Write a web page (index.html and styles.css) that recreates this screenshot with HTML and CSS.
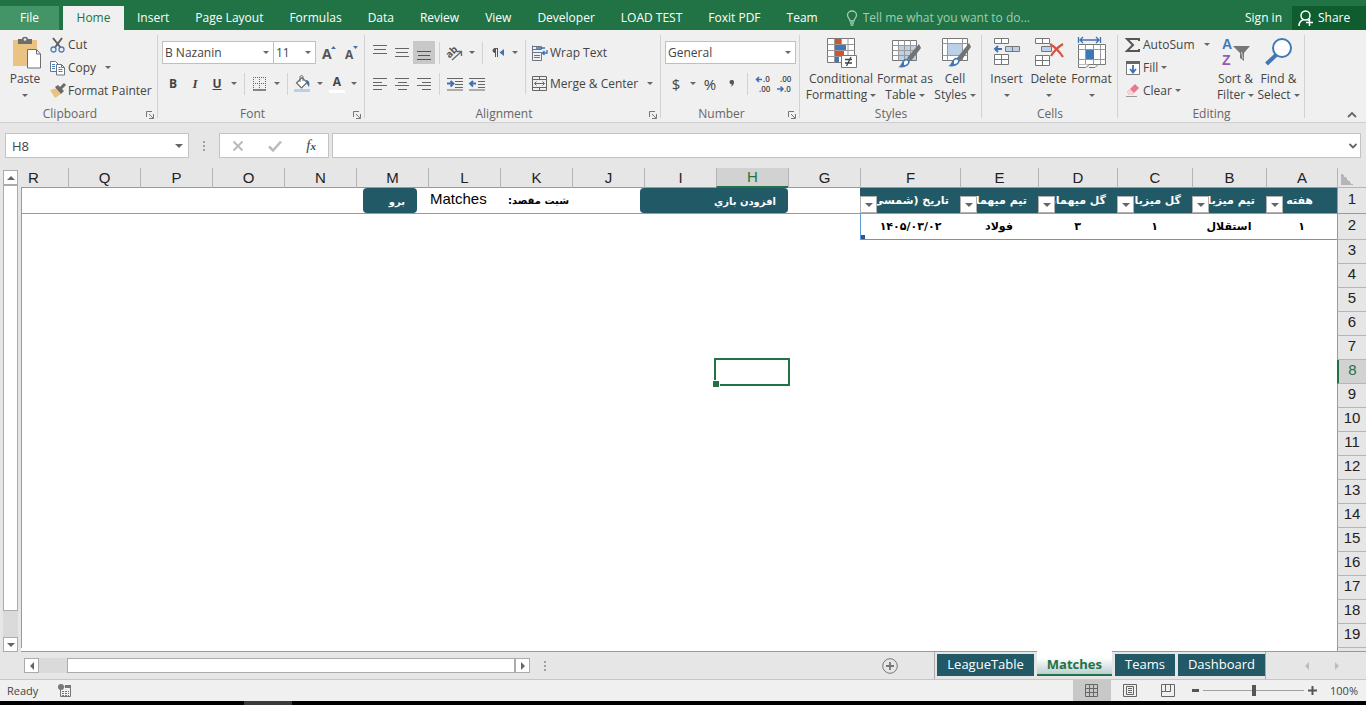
FILE: index.html
```html
<!DOCTYPE html>
<html lang="en">
<head>
<meta charset="utf-8">
<title>Matches</title>
<link rel="stylesheet" href="styles.css">
</head>
<body>
<div class="app">
  <nav class="tabs">
    <button class="tab tab-file">File</button>
    <button class="tab tab-active">Home</button>
    <button class="tab">Insert</button>
    <button class="tab">Page Layout</button>
    <button class="tab">Formulas</button>
    <button class="tab">Data</button>
    <button class="tab">Review</button>
    <button class="tab">View</button>
    <button class="tab">Developer</button>
    <button class="tab">LOAD TEST</button>
    <button class="tab">Foxit PDF</button>
    <button class="tab">Team</button>
    <label class="tell">
      <svg width="12" height="16" viewBox="0 0 12 16" fill="none" stroke="#9fcdb2" stroke-width="1.3"><path d="M4 11C4 8.500 1.500 8 1.500 5a4.500 4 0 0 1 9 0C10.500 8 8 8.500 8 11zM4 13h4M4.500 15h3"/></svg>
      <input type="text" placeholder="Tell me what you want to do..." aria-label="Tell me what you want to do">
    </label>
    <button class="tab sign">Sign in</button>
    <button class="share">
      <svg width="16" height="17" viewBox="0 0 16 17" fill="none" stroke="#fff" stroke-width="1.500"><circle cx="7.500" cy="5.500" r="4.500"/><path d="M1 16c0-4 2-5.500 4.500-6.500M9.500 9.500l1.500 1M11.500 9v7M8 12.500h7"/></svg>
      Share
    </button>
  </nav>

  <section class="ribbon">
    <div class="group g-clip">
      <div class="body">
        <button class="big paste">
          <svg width="30" height="32" viewBox="0 0 30 32"><rect x="1" y="3" width="24" height="26" fill="#eac282"/><path d="M6 2h4c0-3 6-3 6 0h4v5H6z" fill="#6d6d6d"/><circle cx="13" cy="2.500" r="1.300" fill="#f0f0f0"/><path d="M15.500 12.500h9l4 4.500v14h-13z" fill="#fff" stroke="#6d6d6d"/><path d="M24.500 12.500V17h4" fill="none" stroke="#6d6d6d"/></svg>
          <span>Paste</span><i class="caret"></i>
        </button>
        <div class="stack">
          <button class="line"><svg width="16" height="16" viewBox="0 0 16 16" fill="none"><path d="M3 1l7.500 9.500M12 1L5 10.500" stroke="#5e5e5e" stroke-width="2"/><circle cx="3.500" cy="12.500" r="2.500" stroke="#4a7ebb" stroke-width="1.300"/><circle cx="11.500" cy="12.500" r="2.500" stroke="#4a7ebb" stroke-width="1.300"/></svg>Cut</button>
          <button class="line"><svg width="16" height="16" viewBox="0 0 16 16" fill="#fff" stroke="#6a7585"><path d="M.5 1.500h5l2.500 2.500v7.500H.5z"/><path d="M6.500 4.500h5l3 3v7.500h-8zM11.500 4.500v3h3"/><path d="M2 4.500h3M2 6.500h3M2 8.500h3M8.500 9.500h4M8.500 11.500h4M8.500 7.500h2" stroke="#4a7ebb"/></svg>Copy<i class="caret gap"></i></button>
          <button class="line"><svg width="16" height="16" viewBox="0 0 16 16"><path d="M0 7l7-2 4 6-6 4z" fill="#eac282"/><path d="M5 4l3-2 6 6-3 3z" fill="#6a6a6a"/><path d="M10.500 5.500L15 1" stroke="#6a6a6a" stroke-width="3"/></svg>Format Painter</button>
        </div>
      </div>
      <footer>Clipboard<button class="launch" aria-label="Clipboard settings"><svg width="8" height="8" viewBox="0 0 8 8" fill="none" stroke="#777"><path d="M.5 6V.5H6M3 3l4 4M7.500 3v4.500H3"/></svg></button></footer>
    </div>

    <div class="group g-font">
      <div class="body rows">
        <div class="row">
          <label class="combo w-font"><input type="text" value="B Nazanin" aria-label="Font"><i class="caret"></i></label>
          <label class="combo w-size"><input type="text" value="11" aria-label="Font size"><i class="caret"></i></label>
          <button class="ic grow"><svg width="16" height="18" viewBox="0 0 16 18"><text x="0" y="15" class="g-a1">A</text><path d="M9 5l2.500-3L14 5z" fill="#4472b0"/></svg></button>
          <button class="ic"><svg width="16" height="18" viewBox="0 0 16 18"><text x="1" y="15" class="g-a2">A</text><path d="M9 2h5l-2.500 3z" fill="#4472b0"/></svg></button>
        </div>
        <div class="row">
          <button class="ic bold">B</button>
          <button class="ic ital">I</button>
          <button class="ic under">U</button>
          <button class="dd" aria-label="Underline options"><i class="caret"></i></button>
          <i class="sep"></i>
          <button class="ic"><svg width="14" height="14" viewBox="0 0 14 14" stroke="#666" fill="none"><path d="M.5 0v13M6.500 0v13M12.500 0v13M0 .5h13M0 6.500h13" stroke-dasharray="1 1"/><path d="M0 13h13" stroke-width="1.500"/></svg></button>
          <button class="dd" aria-label="Border options"><i class="caret"></i></button>
          <i class="sep"></i>
          <button class="ic"><svg width="18" height="18" viewBox="0 0 18 18"><path d="M0 14h16v3H0z" fill="#b7cfe8"/><path d="M2.500 8L8 2.500l5 5L7.500 13z" fill="#fff" stroke="#6a6a6a" stroke-width="1.200"/><path d="M6 7V2c0-2 3-2 3 0v4" fill="none" stroke="#6a6a6a"/><path d="M12 5c3 0 4 3 3 7l-2-3z" fill="#3f6fa8"/></svg></button>
          <button class="dd" aria-label="Fill options"><i class="caret"></i></button>
          <button class="ic fcol">A</button>
          <button class="dd" aria-label="Font colour options"><i class="caret"></i></button>
        </div>
      </div>
      <footer>Font<button class="launch" aria-label="Font settings"><svg width="8" height="8" viewBox="0 0 8 8" fill="none" stroke="#777"><path d="M.5 6V.5H6M3 3l4 4M7.500 3v4.500H3"/></svg></button></footer>
    </div>

    <div class="group g-align">
      <div class="body">
        <div class="cols-left">
          <div class="row">
            <button class="ic"><svg class="up" width="14" height="14" viewBox="0 0 14 14" stroke="#666"><path d="M0 .5h14M1 4.500h12M0 8.500h14"/></svg></button>
            <button class="ic"><svg width="14" height="14" viewBox="0 0 14 14" stroke="#666"><path d="M0 2.500h14M1 6.500h12M0 10.500h14"/></svg></button>
            <button class="ic on"><svg width="14" height="14" viewBox="0 0 14 14" stroke="#555"><path d="M0 5.500h14M1 9.500h12M0 13.500h14"/></svg></button>
            <i class="sep"></i>
            <button class="ic"><svg width="20" height="18" viewBox="0 0 20 18"><text x="1" y="12" transform="rotate(-45 6 9)" class="g-ab">ab</text><path d="M7 16l9-8M12 7.500h4.500V12" fill="none" stroke="#666" stroke-width="1.300"/></svg></button>
            <button class="dd" aria-label="Orientation options"><i class="caret"></i></button>
            <i class="sep"></i>
            <button class="ic"><svg width="14" height="12" viewBox="0 0 14 12"><path d="M7 1.500H4a2 2 0 0 0 0 4V2M4.500 1v9M6.500 1v9" stroke="#555" fill="#555"/><path d="M13 2v7L8.500 5.500z" fill="#4472b0"/></svg></button>
            <button class="dd" aria-label="Text direction options"><i class="caret"></i></button>
          </div>
          <div class="row">
            <button class="ic"><svg width="14" height="12" viewBox="0 0 14 12" stroke="#666"><path d="M0 .5h14M0 4.500h9M0 7.500h14M0 11.500h9"/></svg></button>
            <button class="ic"><svg width="14" height="12" viewBox="0 0 14 12" stroke="#666"><path d="M0 .5h14M3 4.500h9M0 7.500h14M3 11.500h9"/></svg></button>
            <button class="ic"><svg width="14" height="12" viewBox="0 0 14 12" stroke="#666"><path d="M0 .5h14M5 4.500h9M0 7.500h14M5 11.500h9"/></svg></button>
            <i class="sep"></i>
            <button class="ic"><svg width="16" height="14" viewBox="0 0 16 14" stroke="#666"><path d="M0 1.500h16M8 4.500h8M8 7.500h8M8 10.500h8M0 13h16"/><path d="M0 6.500h6M3.500 4l3 2.500-3 3" stroke="#3f6fb0" fill="none" stroke-width="1.800"/></svg></button>
            <button class="ic"><svg width="16" height="14" viewBox="0 0 16 14" stroke="#666"><path d="M0 1.500h16M9 4.500h7M9 7.500h7M9 10.500h7M0 13h16"/><path d="M1 6.500h6M4 4L1 6.500l3 3" stroke="#3f6fb0" fill="none" stroke-width="1.800"/></svg></button>
          </div>
        </div>
        <div class="cols-right">
          <button class="line tall"><svg width="16" height="16" viewBox="0 0 16 16" fill="none" stroke="#6a7585"><path d="M.5.500v15M.5 1.500h9v3h-9M.5 7.500h9v8h-9M2 10.500h6M2 12.500h6"/><path d="M4 3h9M15 5v3h-4M12.500 6l-2 2 2 2" stroke="#3f6fb0" stroke-width="1.300"/></svg>Wrap Text</button>
          <button class="line tall"><svg width="16" height="16" viewBox="0 0 16 16" fill="none" stroke="#666"><path d="M.5.500h14v14H.5zM.5 3.500h14M.5 11.500h14M7.500.500v3M7.500 11.500v3"/><path d="M2.500 7.500h10M4.500 5.500l-2 2 2 2M10.500 5.500l2 2-2 2" stroke="#3f6fb0"/></svg>Merge &amp; Center<i class="caret gap"></i></button>
        </div>
      </div>
      <footer>Alignment<button class="launch" aria-label="Alignment settings"><svg width="8" height="8" viewBox="0 0 8 8" fill="none" stroke="#777"><path d="M.5 6V.5H6M3 3l4 4M7.500 3v4.500H3"/></svg></button></footer>
    </div>

    <div class="group g-num">
      <div class="body rows">
        <div class="row">
          <label class="combo w-num"><input type="text" value="General" aria-label="Number format"><i class="caret"></i></label>
        </div>
        <div class="row">
          <button class="ic sym">$</button>
          <button class="dd" aria-label="Currency options"><i class="caret"></i></button>
          <button class="ic sym">%</button>
          <button class="ic" aria-label="Comma style"><svg width="8" height="12" viewBox="0 0 8 12"><path d="M3.500 2a2 2 0 0 1 2.500 2c0 2-1 4-3.500 5 1-1 1.500-2 1.200-2.800A2 2 0 0 1 3.500 2z" fill="#555"/></svg></button>
          <i class="sep"></i>
          <button class="ic"><svg width="18" height="20" viewBox="0 0 18 20"><path d="M8 5.500H2.500M5 3L2.500 5.500 5 8" fill="none" stroke="#3f6fb0" stroke-width="1.500"/><text x="9" y="8" class="g-n">.0</text><text x="5" y="18" class="g-n">.00</text></svg></button>
          <button class="ic"><svg width="18" height="20" viewBox="0 0 18 20"><text x="4" y="8" class="g-n">.00</text><path d="M1 15h6M4.500 12.500L7 15l-2.500 2.500" fill="none" stroke="#3f6fb0" stroke-width="1.500"/><text x="8" y="18" class="g-n">.0</text></svg></button>
        </div>
      </div>
      <footer>Number<button class="launch" aria-label="Number settings"><svg width="8" height="8" viewBox="0 0 8 8" fill="none" stroke="#777"><path d="M.5 6V.5H6M3 3l4 4M7.500 3v4.500H3"/></svg></button></footer>
    </div>

    <div class="group g-styles">
      <div class="body">
        <button class="big w-cf">
          <svg width="32" height="32" viewBox="0 0 32 32"><path d="M2.500 1.500h27v24h-27z" fill="#fff" stroke="#777"/><path d="M2.500 7.500h27M2.500 13.500h27M2.500 19.500h27M9.500 1.500v24M16.500 1.500v24M23 1.500v24" stroke="#999"/><path d="M10 2h6v5h-6zM10 14h9v5h-9z" fill="#d35230"/><path d="M10 8h11v5H10zM10 20h4v5h-4z" fill="#3f78b5"/><path d="M16.500 18.500h15v12h-15z" fill="#fff" stroke="#777"/><path d="M20 22.500h7M20 26h7M26 20l-4.500 9" stroke="#444" stroke-width="1.300"/></svg>
          <span>Conditional<br>Formatting<i class="caret"></i></span>
        </button>
        <button class="big w-ft">
          <svg width="32" height="32" viewBox="0 0 32 32"><path d="M3.500 3.500h24v20h-24z" fill="#fff" stroke="#777"/><path d="M9 8h18v15H9z" fill="#bcd0e8"/><path d="M3.500 8.500h24M3.500 13.500h24M3.500 18.500h24M9.500 3.500v20M15.500 3.500v20M21.500 3.500v20" stroke="#999"/><path d="M30 7l2 4-10 13-4-3z" fill="#737373"/><path d="M9 30c4-1 3-6 7-8 4-1 6 2 4 5-2 3-7 4-11 3z" fill="#3f78b5"/><path d="M15 25c1-2 4-2 4 0s-2 3-4 3" fill="#fff"/></svg>
          <span>Format as<br>Table<i class="caret"></i></span>
        </button>
        <button class="big w-cs">
          <svg width="32" height="32" viewBox="0 0 32 32"><path d="M3.500 1.500h25v22h-25z" fill="#fff" stroke="#777"/><path d="M9 7h14v11H9z" fill="#bcd0e8"/><path d="M3.500 6.500h25M3.500 18.500h25M8.500 1.500v22M23.500 1.500v22" stroke="#999"/><path d="M30 6l2 4-10 14-4-3z" fill="#737373"/><path d="M9 29c4-1 3-6 7-8 4-1 6 2 4 5-2 3-7 4-11 3z" fill="#3f78b5"/><path d="M15 24c1-2 4-2 4 0s-2 3-4 3" fill="#fff"/></svg>
          <span>Cell<br>Styles<i class="caret"></i></span>
        </button>
      </div>
      <footer>Styles</footer>
    </div>

    <div class="group g-cells">
      <div class="body">
        <button class="big w-in">
          <svg width="32" height="32" viewBox="0 0 32 32"><g fill="#fff" stroke="#777"><path d="M3.500 1.500h14v5h-14zM10.500 1.500v5M3.500 17.500h14v10h-14zM10.500 17.500v10M3.500 22.500h14"/><path d="M14.500 9.500h14v5h-14zM21.500 9.500v5" fill="#bcd0e8"/></g><path d="M11 12H4M7 9l-3 3 3 3" fill="none" stroke="#3f6fb0" stroke-width="1.800"/></svg>
          <span>Insert</span><i class="caret"></i>
        </button>
        <button class="big w-de">
          <svg width="32" height="32" viewBox="0 0 32 32"><g fill="#fff" stroke="#777"><path d="M2.500 1.500h14v5h-14zM9.500 1.500v5M2.500 18.500h14v10h-14zM9.500 18.500v10M2.500 23.500h14"/><path d="M8.500 9.500h10v5h-10z" fill="#bcd0e8"/></g><path d="M17 7c5 3 9 7 13 13M30 7c-5 3-9 7-12 12" fill="none" stroke="#d35440" stroke-width="2.200"/></svg>
          <span>Delete</span><i class="caret"></i>
        </button>
        <button class="big w-fo">
          <svg width="32" height="32" viewBox="0 0 32 32"><path d="M2.500 0v6M24.500 0v6M4 3h19M7 0L4 3l3 3M20 0l3 3-3 3" fill="none" stroke="#3f6fb0" stroke-width="1.300"/><path d="M2.500 7.500h27v20h-27z" fill="#fff" stroke="#777"/><path d="M2.500 12.500h27M2.500 22.500h27M9.500 7.500v20M17.500 7.500v20M24.500 7.500v20" stroke="#999"/><path d="M10 13h8v9h-8z" fill="#3f78b5"/><path d="M2.500 27.500v3h7l4-3M13 30.500h6l3-3" fill="#fff" stroke="#777"/></svg>
          <span>Format</span><i class="caret"></i>
        </button>
      </div>
      <footer>Cells</footer>
    </div>

    <div class="group g-edit">
      <div class="body">
        <div class="stack">
          <button class="line"><svg width="16" height="16" viewBox="0 0 16 16" fill="none" stroke="#555" stroke-width="2"><path d="M14 4V2H2l6 6-6 6h12v-2"/></svg>AutoSum<i class="caret gap"></i></button>
          <button class="line"><svg width="16" height="16" viewBox="0 0 16 16"><path d="M1.500 1.500h13v13h-13z" fill="#fff" stroke="#777"/><path d="M1 1h14v3H1z" fill="#666"/><path d="M8 5v7M5 9l3 3.500L11 9" fill="none" stroke="#3f6fb0" stroke-width="1.800"/></svg>Fill<i class="caret"></i></button>
          <button class="line"><svg width="16" height="16" viewBox="0 0 16 16"><path d="M2 9l8-8 4 4-7 7H4z" fill="#e8788c"/><path d="M2 9l3-3 4 4-2 2H4z" fill="#f7d3da"/><path d="M1 13.500h11" stroke="#999"/></svg>Clear<i class="caret"></i></button>
        </div>
        <button class="big w-so">
          <svg width="32" height="32" viewBox="0 0 32 32"><text x="2" y="12" class="g-az a">A</text><text x="2" y="28" class="g-az z">Z</text><path d="M13 9h17l-6 7v8l-4-3v-5z" fill="#777"/><path d="M21.500 15l1.500 7" stroke="#ccc"/></svg>
          <span>Sort &amp;<br>Filter<i class="caret"></i></span>
        </button>
        <button class="big w-fi">
          <svg width="32" height="32" viewBox="0 0 32 32"><circle cx="19" cy="11" r="9" fill="#fff" stroke="#3f78b5" stroke-width="2"/><path d="M13 18L3.500 27" stroke="#3f78b5" stroke-width="4"/></svg>
          <span>Find &amp;<br>Select<i class="caret"></i></span>
        </button>
      </div>
      <footer>Editing</footer>
    </div>
    <button class="collapse" aria-label="Collapse the ribbon"><svg width="10" height="7" viewBox="0 0 10 7" fill="none" stroke="#666" stroke-width="1.800"><path d="M1 6l4-4 4 4"/></svg></button>
  </section>

  <section class="formula">
    <label class="namebox"><input type="text" value="H8" aria-label="Name box"><i class="caret wide"></i></label>
    <i class="dots"></i>
    <div class="fx">
      <button aria-label="Cancel"><svg width="12" height="12" viewBox="0 0 12 12" stroke="#bbb" stroke-width="2"><path d="M1.500 1.500l9 9M10.500 1.500l-9 9"/></svg></button>
      <button aria-label="Enter"><svg width="14" height="12" viewBox="0 0 14 12" fill="none" stroke="#bbb" stroke-width="2.500"><path d="M1 6.500l4 4L13 1.500"/></svg></button>
      <button class="fn">f<small>x</small></button>
    </div>
    <label class="entry"><input type="text" aria-label="Formula"><svg width="8" height="6" viewBox="0 0 8 6" fill="none" stroke="#666" stroke-width="1.800"><path d="M.5 1L4 4.500 7.500 1"/></svg></label>
  </section>

  <main class="work">
    <div class="vscroll">
      <button aria-label="Scroll up"><i class="tri up"></i></button>
      <div class="vthumb"></div>
      <button aria-label="Scroll down"><i class="tri down"></i></button>
    </div>
    <div class="sheet" dir="rtl">
      <table class="grid">
        <colgroup><col class="c-h"><col class="c-a"><col class="c-b"><col class="c-c"><col class="c-d"><col class="c-e"><col class="c-f"><col class="c-n" span="11"><col></colgroup>
        <thead>
          <tr><th class="corner"></th><th>A</th><th>B</th><th>C</th><th>D</th><th>E</th><th>F</th><th>G</th><th class="cur">H</th><th>I</th><th>J</th><th>K</th><th>L</th><th>M</th><th>N</th><th>O</th><th>P</th><th>Q</th><th class="last">R</th></tr>
        </thead>
        <tbody>
          <tr class="r1">
            <th>1</th>
            <td class="hd mid">هفته<button class="flt" aria-label="Filter"><i class="caret wide"></i></button></td>
            <td class="hd">تیم میزبان<button class="flt" aria-label="Filter"><i class="caret wide"></i></button></td>
            <td class="hd">گل میزبان<button class="flt" aria-label="Filter"><i class="caret wide"></i></button></td>
            <td class="hd">گل میهمان<button class="flt" aria-label="Filter"><i class="caret wide"></i></button></td>
            <td class="hd">تیم میهمان<button class="flt" aria-label="Filter"><i class="caret wide"></i></button></td>
            <td class="hd">تاریخ (شمسی<button class="flt" aria-label="Filter"><i class="caret wide"></i></button></td>
            <td></td>
            <td colspan="2" class="host"><button class="act add">افزودن بازي</button></td>
            <td></td>
            <td class="lbl">شیت مقصد:</td>
            <td class="val">Matches</td>
            <td class="host"><button class="act go">برو</button></td>
            <td colspan="5"></td>
          </tr>
          <tr class="r2">
            <th>2</th>
            <td class="rec">۱</td><td class="rec">استقلال</td><td class="rec">۱</td><td class="rec">۳</td><td class="rec">فولاد</td><td class="rec end"><bdi dir="ltr">۱۴۰۵/۰۳/۰۲</bdi></td>
            <td colspan="12"></td>
          </tr>
          <tr><th>3</th><td colspan="18"></td></tr>
          <tr><th>4</th><td colspan="18"></td></tr>
          <tr><th>5</th><td colspan="18"></td></tr>
          <tr><th>6</th><td colspan="18"></td></tr>
          <tr><th>7</th><td colspan="18"></td></tr>
          <tr><th class="cur">8</th><td colspan="7"></td><td class="host"><div class="selection"></div></td><td colspan="10"></td></tr>
          <tr><th>9</th><td colspan="18"></td></tr>
          <tr><th>10</th><td colspan="18"></td></tr>
          <tr><th>11</th><td colspan="18"></td></tr>
          <tr><th>12</th><td colspan="18"></td></tr>
          <tr><th>13</th><td colspan="18"></td></tr>
          <tr><th>14</th><td colspan="18"></td></tr>
          <tr><th>15</th><td colspan="18"></td></tr>
          <tr><th>16</th><td colspan="18"></td></tr>
          <tr><th>17</th><td colspan="18"></td></tr>
          <tr><th>18</th><td colspan="18"></td></tr>
          <tr><th>19</th><td colspan="18"></td></tr>
        </tbody>
      </table>
    </div>
  </main>

  <section class="bottom">
    <div class="hscroll">
      <button aria-label="Scroll left"><i class="tri left"></i></button>
      <div class="hthumb"></div>
      <button aria-label="Scroll right"><i class="tri right"></i></button>
    </div>
    <i class="dots"></i>
    <button class="plus" aria-label="New sheet"><svg width="16" height="16" viewBox="0 0 16 16" fill="none" stroke="#777"><circle cx="8" cy="8" r="7.300"/><path d="M8 4v8M4 8h8" stroke-width="1.800"/></svg></button>
    <div class="sheets">
      <button class="sh">LeagueTable</button>
      <button class="sh sh-on">Matches</button>
      <button class="sh">Teams</button>
      <button class="sh">Dashboard</button>
    </div>
    <div class="navs"><i class="tri left"></i><i class="tri right"></i></div>
  </section>

  <footer class="status">
    <span>Ready</span>
    <svg class="macro" width="14" height="14" viewBox="0 0 14 14"><path d="M2.500 4.500v8h10v-10h-6" fill="none" stroke="#777"/><path d="M7 1h6v3H7z" fill="#777"/><path d="M4 7.500h7M4 9.500h7M4 11.500h7" stroke="#777" stroke-dasharray="2 1"/><circle cx="3" cy="3" r="3" fill="#777"/></svg>
    <div class="views">
      <button class="view on" aria-label="Normal"><svg width="14" height="14" viewBox="0 0 14 14" fill="none" stroke="#666"><path d="M.5.500h12v12H.5zM.5 4.500h12M.5 8.500h12M4.500.500v12M8.500.500v12"/></svg></button>
      <button class="view" aria-label="Page layout"><svg width="14" height="14" viewBox="0 0 14 14" fill="none" stroke="#666"><path d="M.5.500h13v12H.5zM3.500 2.500h7v8h-7zM5 4.500h4M5 6.500h4M5 8.500h4"/></svg></button>
      <button class="view" aria-label="Page break preview"><svg width="14" height="14" viewBox="0 0 14 14" fill="none" stroke="#666"><path d="M.5.500h13v12H.5zM4.500.500v7h5v-7M.5 7.500h4"/></svg></button>
    </div>
    <svg width="7" height="3"><path d="M0 0h7v3H0z" fill="#555"/></svg>
    <input class="zoom" type="range" min="0" max="100" value="50" aria-label="Zoom">
    <svg width="9" height="9" viewBox="0 0 9 9"><path d="M4.500 0v9M0 4.500h9" stroke="#555" stroke-width="2"/></svg>
    <span class="pc">100%</span>
  </footer>
  <div class="edge"></div>
</div>
</body>
</html>
```
FILE: styles.css
```css
* { box-sizing: border-box; }
body {
  margin: 0;
  font: 12px/16px "Open Sans", "Noto Sans", sans-serif;
  color: #444;
  background: #e6e6e6;
}
button, input { font: inherit; color: inherit; margin: 0; padding: 0; border: 0; background: none; }
input { min-width: 0; outline: 0; }
svg { display: block; flex: none; overflow: visible; }
i { font-style: normal; }
.app { display: flex; flex-direction: column; height: 100vh; overflow: hidden; }
.caret { display: inline-block; flex: none; border: 3px solid transparent; border-top-color: #666; border-bottom: 0; }
.caret.wide { border-width: 4px 4px 0; }

/* Tab strip */
.tabs { display: flex; flex: none; height: 30px; padding-top: 6px; background: #217346; color: #fff; }
.tab { padding: 0 13px; white-space: nowrap; }
.tab-file { width: 59px; margin-right: 4px; background: #439467; }
.tab-active { width: 61px; background: #f0f0f0; color: #217346; }
.tell { display: flex; align-items: center; gap: 5px; flex: 1; margin-left: 15px; }
.tell input { flex: 1; }
.tell input::placeholder { color: #9fcdb2; opacity: 1; }
.sign { padding: 0 10px; }
.share { display: flex; align-items: center; gap: 4px; width: 74px; padding-left: 6px; background: #0f5c2f; }

/* Ribbon */
.ribbon { display: flex; flex: none; height: 93px; background: #f0f0f0; border-bottom: 1px solid #d0d0d0; }
.group { display: flex; flex-direction: column; flex: none; position: relative; }
.group::after { content: ""; position: absolute; right: 0; top: 5px; bottom: 4px; width: 1px; background: #d2d2d2; }
.g-clip { width: 158px; }
.g-font { width: 207px; }
.g-align { width: 296px; }
.g-num { width: 139px; }
.g-styles { width: 182px; }
.g-cells { width: 136px; }
.g-edit { width: 187px; }
.body { display: flex; height: 76px; }
.group footer { padding-right: 18px; text-align: center; color: #666; position: relative; }
.g-styles footer, .g-cells footer, .g-edit footer { padding-right: 0; }
.launch { position: absolute; right: 4px; top: 5px; }
.big { display: flex; flex-direction: column; align-items: center; padding-top: 7px; gap: 2px; white-space: nowrap; }
.big .caret { margin-left: 3px; vertical-align: 2px; }
.big > .caret { margin: 5px 0 0; }
.paste { width: 50px; }
.paste svg { margin-left: 3px; }
.stack { display: flex; flex-direction: column; padding-top: 3px; }
.line { display: flex; align-items: center; gap: 2px; height: 23px; white-space: nowrap; }
.line .caret { margin-left: 1px; }
.line.tall { height: 31px; }
.line .gap { margin-left: 7px; }
.rows, .cols-left, .cols-right { display: flex; flex-direction: column; padding-top: 7px; }
.rows { padding-left: 4px; }
.cols-left { width: 160px; padding-left: 4px; }
.cols-right { position: relative; padding-left: 7px; }
.cols-right::before { content: ""; position: absolute; left: 0; top: 10px; height: 54px; width: 1px; background: #d2d2d2; }
.row { display: flex; align-items: center; height: 31px; }
.combo { display: flex; align-items: center; height: 23px; padding: 0 4px 0 2px; border: 1px solid #c0c0c0; background: #fff; }
.combo input { flex: 1; width: 20px; }
.w-font { width: 112px; }
.w-size { width: 43px; margin-left: -1px; }
.w-num { width: 131px; }
.ic { display: flex; align-items: center; justify-content: center; width: 22px; height: 23px; }
.ic.on { background: #c8c8c8; }
.ic .up { margin-bottom: 2px; }
.grow { margin-left: 3px; }
.dd { display: flex; align-items: center; justify-content: center; width: 12px; height: 22px; }
.sep { width: 1px; height: 22px; margin: 0 4px; background: #d2d2d2; }
.bold { font-weight: 700; }
.ital { font: italic 700 13px/16px "Liberation Serif", serif; }
.under { font-weight: 700; text-decoration: underline; }
.fcol { font-weight: 700; height: 18px; border-bottom: 3px solid #fff; width: 16px; margin: 0 3px; }
.sym { font-size: 15px; }
.g-a1, .g-a2, .g-ab { font-weight: 700; fill: #555; }
.g-a1 { font-size: 14px; }
.g-a2 { font-size: 12px; }
.g-ab { font-size: 10px; }
.g-n { font-size: 8px; font-weight: 600; fill: #444; }
.g-az { font: 700 14px/14px "Liberation Sans", Arial, sans-serif; }
.g-az.a { fill: #3f78c0; }
.g-az.z { fill: #9458b8; }
.g-styles .body { padding-left: 5px; }
.w-cf { width: 72px; }
.w-ft { width: 56px; }
.w-cs { width: 44px; }
.g-cells .body { padding-left: 4px; }
.w-in { width: 41px; }
.w-de { width: 43px; }
.w-fo { width: 43px; }
.g-edit .stack { width: 96px; padding-left: 7px; }
.w-so { width: 43px; }
.w-fi { width: 43px; }
.collapse { margin: auto 9px 4px auto; }

/* Formula bar */
.formula { display: flex; flex: none; align-items: center; height: 45px; padding: 0 5px; }
.namebox, .fx, .entry { display: flex; align-items: center; height: 25px; border: 1px solid #c3c3c3; background: #fff; }
.namebox { width: 184px; padding: 0 5px 0 6px; font-size: 13px; }
.namebox input { flex: 1; }
.dots { width: 2px; height: 10px; margin: 0 14px; background: repeating-linear-gradient(#a0a0a0 0 2px, transparent 2px 4px); }
.fx { width: 110px; margin-right: 3px; justify-content: space-around; }
.fn { font: italic 15px/16px "Liberation Serif", serif; }
.fn small { font-size: 11px; font-weight: 700; }
.entry { flex: 1; padding: 0 3px; }
.entry input { flex: 1; }

/* Worksheet */
.work { display: flex; flex: 1; min-height: 0; }
.vscroll { display: flex; flex-direction: column; width: 15px; margin: 2px 3px 0; background: #dadada; }
.vscroll button, .hscroll button { display: flex; align-items: center; justify-content: center; flex: none; width: 15px; height: 15px; border: 1px solid #ababab; background: #fff; }
.vthumb { flex: 1; margin-bottom: 26px; border: 1px solid #ababab; background: #fff; }
.tri { border: 4px solid transparent; }
.tri.up { border-bottom-color: #666; border-top: 0; }
.tri.down { border-top-color: #666; border-bottom: 0; }
.tri.left { border-right-color: #666; border-left: 0; }
.tri.right { border-left-color: #666; border-right: 0; }
.sheet { flex: 1; min-width: 0; overflow: hidden; border-bottom: 1px solid #999; background: linear-gradient(to left, #e6e6e6 28px, #999 28px 29px, #fff 29px); }
.grid { width: 100%; table-layout: fixed; border-collapse: separate; border-spacing: 0; }
.c-h { width: 29px; }
.c-a { width: 71px; }
.c-b { width: 74px; }
.c-c { width: 75px; }
.c-d { width: 79px; }
.c-e { width: 78px; }
.c-f { width: 100px; }
.c-n { width: 72px; }
.grid th, .grid td { padding: 0; height: 24px; }
.grid th { font: 15px/16px "Liberation Sans", Arial, sans-serif; color: #222; background: #e6e6e6; }
.grid thead th { height: 20px; border-bottom: 1px solid #999; border-left: 1px solid #b5b5b5; }
.grid thead .last { text-align: left; padding-left: 7px; border-left: 0; }
.grid thead .cur { background: #d2d2d2; color: #217346; border-bottom: 2px solid #217346; }
.grid thead .corner { border-bottom-color: #b5b5b5; background: linear-gradient(45deg, #b5b5b5 50%, transparent 50%) 3px 5px / 12px 12px no-repeat #e6e6e6; }
.grid tbody th { padding: 0 0 4px 0; border-left: 1px solid #999; border-bottom: 1px solid #b5b5b5; }
.grid tbody th.cur { background: #d2d2d2; color: #217346; border-left: 2px solid #217346; }
.grid tbody td { font: 700 11px/16px "DejaVu Sans", sans-serif; color: #000; background: #fff; white-space: nowrap; }
.grid tbody tr td:last-child { border-left: 1px solid #999; }
.grid .r1 th, .grid .r1 td { height: 26px; border-bottom: 1px solid #999; }
.grid .r2 th, .grid .r2 td { height: 26px; }
.grid .r1 .hd { position: relative; overflow: hidden; padding-right: 11px; background: #215967; color: #fff; }
.grid .r1 .mid { padding-right: 24px; }
.flt { position: absolute; left: 0; bottom: 0; display: flex; align-items: center; justify-content: center; width: 17px; height: 17px; border: 1px solid #b0b0b0; background: #fff; }
.host { position: relative; }
.act { position: absolute; top: 0; height: 25px; padding: 2px 12px 0; border-radius: 4px; background: #215967; color: #fff; font-size: 10px; text-align: right; }
.add { right: 0; width: 148px; }
.go { right: 11px; width: 54px; }
.grid .r1 .lbl { padding-right: 3px; font-size: 10px; text-align: right; }
.grid .r1 .val { padding: 0 0 4px 2px; font: 15px/16px "Liberation Sans", Arial, sans-serif; text-align: left; }
.grid .r2 .rec { text-align: center; border-bottom: 1px solid #5b9bd5; }
.grid .r2 .end { border-left: 1px solid #5b9bd5; background: linear-gradient(#305496, #305496) left bottom / 4px 4px no-repeat #fff; }
.selection { position: absolute; inset: -2px; border: 2px solid #217346; }
.selection::after { content: ""; position: absolute; left: -3px; bottom: -3px; width: 6px; height: 6px; border: 1px solid #fff; border-width: 1px 1px 0 0; background: #217346; }

/* Sheet tabs */
.bottom { display: flex; flex: none; align-items: center; height: 28px; padding-left: 24px; border-bottom: 1px solid #c6c6c6; }
.hscroll { display: flex; flex: 0 1 506px; background: #dadada; }
.hthumb { flex: 1; margin-left: 28px; border: 1px solid #ababab; background: #fff; }
.plus { margin-left: auto; margin-right: 36px; }
.sheets { display: flex; align-self: stretch; gap: 3px; padding: 2px 0 3px 2px; border: 1px solid #ababab; border-width: 0 1px; }
.sh { padding: 0 10px 2px; font-size: 13px; background: #215967; color: #fff; }
.sh-on { margin-top: -3px; padding: 2px 10px 0; border-bottom: 2px solid #217346; background: linear-gradient(#fff 30%, #bccfd3); color: #217346; font-weight: 700; }
.navs { display: flex; justify-content: space-between; width: 34px; margin: 0 27px 0 39px; }
.navs .tri.left { border-right-color: #bbb; }
.navs .tri.right { border-left-color: #bbb; }

/* Status bar */
.status { display: flex; flex: none; align-items: center; height: 21px; padding: 0 8px 0 7px; background: #f0f0f0; font-size: 11px; }
.macro { margin-left: 20px; }
.views { display: flex; align-self: stretch; margin-left: auto; margin-right: 5px; }
.view { display: flex; align-items: center; justify-content: center; width: 38px; }
.view.on { background: #c8c8c8; }
.zoom { width: 101px; height: 12px; margin: 0 4px; appearance: none; background: linear-gradient(#a0a0a0, #a0a0a0) center / 100% 1px no-repeat; }
.zoom::-webkit-slider-thumb { appearance: none; width: 4px; height: 11px; background: #555; }
.pc { margin-left: 13px; }
.edge { flex: none; height: 4px; background: linear-gradient(to right, transparent 244px, #3a3a3a 244px 292px, transparent 292px) #000; }
```
